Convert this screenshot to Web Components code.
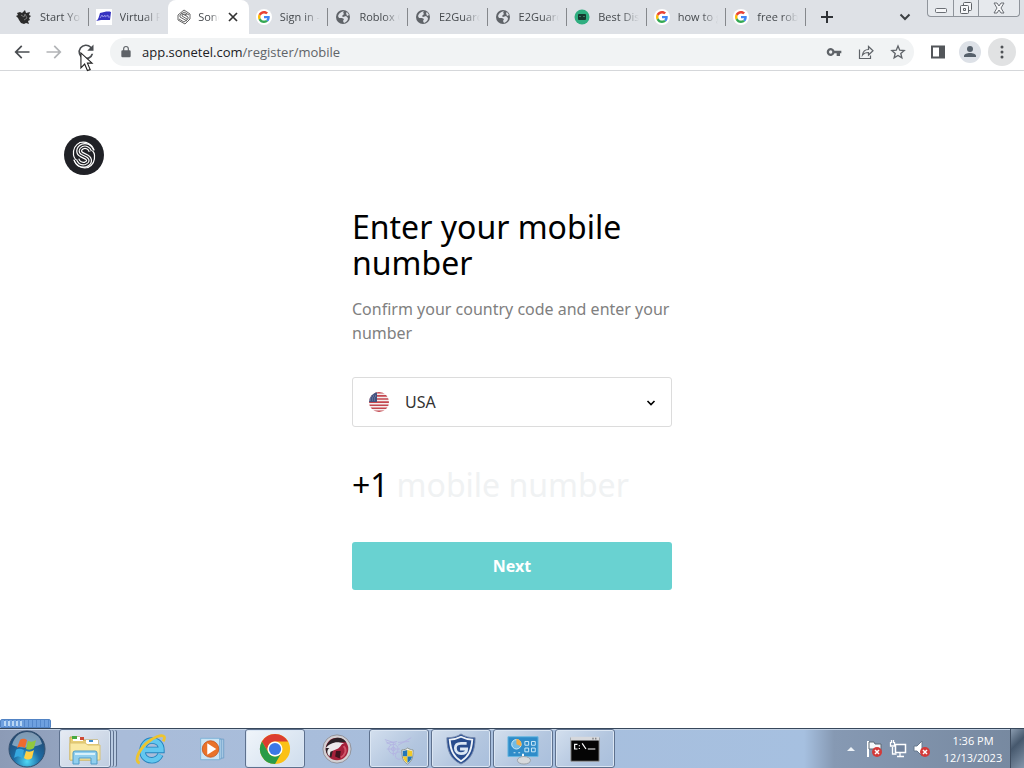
<!DOCTYPE html>
<html lang="en">
<head>
<meta charset="utf-8">
<meta name="viewport" content="width=device-width, initial-scale=1">
<title>Sonetel</title>
<style>
  html, body {
    margin: 0;
    height: 100%;
  }
  body {
    font-family: "Open Sans", "Noto Sans", sans-serif;
    background: #fff;
  }
</style>
</head>
<body>
<desktop-screen>
  <tab-strip slot="browser">
    <browser-tab icon="eagle">Start Your</browser-tab>
    <browser-tab icon="virtual">Virtual P</browser-tab>
    <browser-tab icon="swirl" active>Sonetel</browser-tab>
    <browser-tab icon="google">Sign in -</browser-tab>
    <browser-tab icon="globe">Roblox G</browser-tab>
    <browser-tab icon="globe">E2Guardian</browser-tab>
    <browser-tab icon="globe">E2Guardian</browser-tab>
    <browser-tab icon="robot">Best Disc</browser-tab>
    <browser-tab icon="google">how to g</browser-tab>
    <browser-tab icon="google">free robux</browser-tab>
  </tab-strip>
  <nav-bar slot="browser"></nav-bar>
  <register-page slot="page"></register-page>
  <task-bar slot="taskbar"></task-bar>
</desktop-screen>

<script>
const icons = {
  eagle: `<svg viewBox="0 0 16 16"><path fill="#2b2b2b" d="M1 4l3-1 2 1 3-3 1 3 4-1-1 3 2 1-2 2 1 2-2 1 1 3-3-1-2 1-3-1-2-3-1-2-2-2 2-1z"/><path d="M5 6l3 2 1-3 2 4-3 2" fill="none" stroke="#777"/></svg>`,
  virtual: `<svg viewBox="0 0 16 16"><path fill="#fff" d="M0 0h16v16H0z"/><path fill="#3532c0" d="M4 4c4-1 8-2 11-1l-1 8H5l-5 1c2-1 3-4 4-8z"/><path d="M4 9l2-3 1 2 2-2v2l3-2v2h2" fill="none" stroke="#8f8de6"/></svg>`,
  swirl: `<svg viewBox="0 0 16 16" fill="none" stroke="#666" stroke-width="1"><path d="M8 1l6 4v5l-5 5-7-4V6z"/><path d="M13 6L8 3 4 6v2l7 4M3 10l5 3 4-3V8L5 4"/><path d="M11 6L8 5 6 6v1l5 3"/></svg>`,
  google: `<svg viewBox="0 0 48 48"><circle cx="24" cy="24" r="24" fill="#fff"/><g transform="translate(6 6) scale(.75)"><path fill="#ea4335" d="M24 9.500c3.540 0 6.710 1.220 9.210 3.600l6.850-6.850C35.900 2.380 30.470 0 24 0 14.620 0 6.510 5.380 2.560 13.220l7.980 6.190C12.430 13.720 17.740 9.500 24 9.500z"/><path fill="#4285f4" d="M46.980 24.550c0-1.570-.15-3.090-.38-4.550H24v9.020h12.940c-.58 2.960-2.260 5.480-4.780 7.180l7.730 6c4.510-4.180 7.090-10.360 7.090-17.650z"/><path fill="#fbbc05" d="M10.530 28.590A14.500 14.500 0 0 1 9.770 24c0-1.600.27-3.140.76-4.590l-7.980-6.190A23.900 23.900 0 0 0 0 24c0 3.880.92 7.540 2.560 10.780z"/><path fill="#34a853" d="M24 48c6.480 0 11.930-2.130 15.890-5.810l-7.730-6c-2.150 1.450-4.920 2.300-8.160 2.300-6.260 0-11.570-4.220-13.470-9.910l-7.980 6.190C6.510 42.620 14.620 48 24 48z"/></g></svg>`,
  globe: `<svg viewBox="0 0 16 16"><circle cx="8" cy="8" r="7" fill="#5f6368"/><path fill="#dee1e6" d="M3 7c1-3 3-4 6-5-1 1-1 2 0 3l-2 2 1 1 3-1 2 2c0 3-2 4-4 5l-1-2 1-2-2-1H4zM11 4l1-1 2 3-2 1z"/></svg>`,
  robot: `<svg viewBox="0 0 16 16"><circle cx="8" cy="8" r="7.500" fill="#2fae80"/><rect x="4" y="5" width="8" height="6" rx="1" fill="#16382f"/><path d="M5 7h2v1H5zM9 7h2v1H9z" fill="#3c7a68"/></svg>`,
  close: `<svg viewBox="0 0 16 16"><path d="M4 4l8 8M12 4l-8 8" stroke="#333" stroke-width="1.700"/></svg>`,
  plus: `<svg viewBox="0 0 16 16"><path d="M8 2v12M2 8h12" stroke="#2f3236" stroke-width="2"/></svg>`,
  chevron: `<svg viewBox="0 0 16 16"><path d="M3.500 5.500L8 10l4.500-4.500" fill="none" stroke="#3c4043" stroke-width="2"/></svg>`,
  back: `<svg viewBox="0 0 24 24"><path fill="#4a4d51" d="M21 11H6.830l5.590-5.590L11 4l-8 8 8 8 1.410-1.410L6.830 13H21z"/></svg>`,
  forward: `<svg viewBox="0 0 24 24"><path fill="#b2b4b7" d="M3 11h14.170l-5.590-5.590L13 4l8 8-8 8-1.410-1.410L17.170 13H3z"/></svg>`,
  reload: `<svg viewBox="0 0 24 24"><path fill="#4a4d51" d="M18.400 5.600A9 9 0 1 0 20.700 14h-2.100A7 7 0 1 1 17 7l-3.500 3.500H21V3z"/></svg>`,
  lock: `<svg viewBox="0 0 24 24"><path fill="#5f6368" d="M17 9V6.500a5 5 0 0 0-10 0V9H6a2 2 0 0 0-2 2v8a2 2 0 0 0 2 2h12a2 2 0 0 0 2-2v-8a2 2 0 0 0-2-2zM9 6.500a3 3 0 0 1 6 0V9H9z"/></svg>`,
  key: `<svg viewBox="0 0 24 24"><path fill="#5f6368" fill-rule="evenodd" d="M12.700 10A6 6 0 1 0 12.700 14H16v4h5v-4h2v-4zM7 14.500a2.500 2.500 0 1 1 0-5 2.500 2.500 0 0 1 0 5z"/></svg>`,
  share: `<svg viewBox="0 0 16 16" fill="none" stroke="#5f6368" stroke-width="1.200"><path d="M1.500 5.500v9h11v-3"/><path d="M4.500 11c.5-4 3-5.500 6-5.500v-3L15 6.800 10.500 11V8.500c-3 0-4.500.5-6 2.500z"/></svg>`,
  star: `<svg viewBox="0 0 24 24"><path fill="none" stroke="#5f6368" stroke-width="2" d="M12 3l2.600 6.200 6.700.6-5.100 4.400 1.600 6.600L12 17.300l-5.800 3.500 1.600-6.600-5.100-4.400 6.700-.6z"/></svg>`,
  panel: `<svg viewBox="0 0 16 16"><path fill="#53565a" fill-rule="evenodd" d="M1 1.500h14v13H1zM3 3.500h6v9H3z"/></svg>`,
  person: `<svg viewBox="0 0 22 22"><circle cx="11" cy="11" r="11" fill="#dde1e7"/><circle cx="11" cy="8" r="3" fill="#56606b"/><path fill="#56606b" d="M5 16v-1c0-2 3-3 6-3s6 1 6 3v1z"/></svg>`,
  dots: `<svg viewBox="0 0 16 16" fill="#4f5256"><circle cx="8" cy="3" r="1.500"/><circle cx="8" cy="8" r="1.500"/><circle cx="8" cy="13" r="1.500"/></svg>`,
  minimize: `<svg viewBox="0 0 16 16"><rect x="2.500" y="8.500" width="11" height="4" rx="1" fill="#f6f7f9" stroke="#6b6f75"/></svg>`,
  restore: `<svg viewBox="0 0 16 16" fill="#f6f7f9" stroke="#5f6368"><rect x="5.500" y="2.500" width="8" height="8" rx="1"/><rect x="2.500" y="5.500" width="8" height="8" rx="1"/><path d="M5.500 8.500h2v2h-2z"/></svg>`,
  exit: `<svg viewBox="0 0 16 16"><path d="M3 3h3l2 3 2-3h3l-3 5 3 5h-3l-2-3-2 3H3l3-5z" fill="#f6f7f9" stroke="#6b6f75"/></svg>`,
  logo: `<svg viewBox="0 0 40 40" fill="none"><defs><path id="s" d="M27.500 16C26 12 22 10 18.500 11.500c-4 2-4.500 6-1 8l5 2.500c4 2.500 3 6-1 7.500-4 1-7.500-1-9-5"/></defs><circle cx="20" cy="20" r="20" fill="#202126"/><g stroke="#fff" stroke-width="1.200" stroke-linecap="round"><path d="M16 7.500C11 10 9 15 9.500 20c.5 4 3 6 7 8"/><path d="M16 7.500C22 6 28 9 30 15"/><path d="M24 32.500c5-2.500 7-7.500 6.500-12.500-.5-4-3-6-7-8"/><path d="M24 32.500C18 34 12 31 10 25"/></g><use href="#s" stroke="#fff" stroke-width="6"/><use href="#s" stroke="#202126" stroke-width="3.600"/><use href="#s" stroke="#fff" stroke-width="1.100"/></svg>`,
  flag: `<svg viewBox="0 0 20 20"><defs><clipPath id="round"><circle cx="10" cy="10" r="10"/></clipPath></defs><g clip-path="url(#round)"><path fill="#f5eeee" d="M0 0h20v20H0z"/><path stroke="#c4474f" stroke-width="1.600" d="M0 .8h20M0 3.900h20M0 7h20M0 10.100h20M0 13.200h20M0 16.300h20M0 19.400h20"/><path fill="#42527f" d="M0 0h8v10H0z"/><path stroke="#7f8bb0" stroke-dasharray="1 1" d="M2 4h5M1 6h6M1 8h6"/></g></svg>`,
  caret: `<svg viewBox="0 0 10 10"><path d="M1.500 4L5 7.500 8.500 4" fill="none" stroke="#000" stroke-width="1.600"/></svg>`,
  pointer: `<svg viewBox="0 0 14 22"><path d="M1 1v16l4-4 3 7 3-1-3-7h5z" fill="#fff" stroke="#222" stroke-width="1.200"/></svg>`,
  windows: `<svg viewBox="0 0 38 38"><defs><radialGradient id="orb" cx=".5" cy=".85" r=".8"><stop offset="0" stop-color="#4fd8f5"/><stop offset=".45" stop-color="#1d6ca5"/><stop offset="1" stop-color="#23466d"/></radialGradient></defs><circle cx="19" cy="19" r="18" fill="url(#orb)" stroke="#34506f"/><path d="M4 15C7 5 13 2 19 2s13 3 15 12c-9 4-20 5-30 1z" fill="#dcecf5" opacity=".5"/><path fill="#ee6b2f" d="M12 10c3-2 5-1 7 0l-2 8c-2-1-5-2-8 0z"/><path fill="#91c83e" d="M20 11c3 1 5 1 8-1l-2 8c-3 2-5 2-8 1z"/><path fill="#36a8e0" d="M8 20c3-2 5-1 8 0l-2 8c-3-2-5-2-8 0z"/><path fill="#ffd044" d="M18 21c3 1 5 1 8-1l-2 8c-3 2-5 2-8 0z"/></svg>`,
  explorer: `<svg viewBox="0 0 34 34"><path fill="#e8ce77" stroke="#c3a852" d="M2 5h10l2 3h16v20H2z"/><path fill="#fff" d="M5 5h10v4H5zM18 8h12v4H18z"/><path fill="#45aa43" d="M4 4h5v3H4z"/><path fill="#ce4a35" d="M12 5h4v3h-4z"/><path fill="#3e8ecb" d="M21 8h4v2h-4z"/><path fill="#f9e9a4" stroke="#dac271" d="M2 11h15l3 2h12v15H2z"/><path fill="#91cfee" stroke="#4e9bc8" d="M5 32V21q0-2 2-2h20q2 0 2 2v11h-6v-6H11v6z"/><path fill="#d7f1fb" d="M7 21h20v2H7z"/></svg>`,
  ie: `<svg viewBox="0 0 34 34"><path fill="none" stroke="#2583bd" stroke-width="7" d="M27 23c-2 4-5 6-9 6-6 0-10-4-10-10S12 8 18 8s10 4 10 10H10"/><path fill="none" stroke="#63c7ef" stroke-width="5" d="M27 23c-2 4-5 6-9 6-6 0-10-4-10-10S12 8 18 8s10 4 10 10H10"/><path fill="none" stroke="#edc42f" stroke-width="3" d="M5 32C-1 30 3 20 12 11 20 4 29 1 31 4c1 1 0 3-1 5"/></svg>`,
  player: `<svg viewBox="0 0 34 34"><path fill="#a5c7e2" stroke="#6c9fc8" d="M10 5h20v23H10z"/><path fill="#b9d8ee" stroke="#6c9fc8" d="M7 5h20v24H7z"/><path fill="#cae4f4" stroke="#75aed5" d="M2 4h23v26H2z"/><circle cx="14" cy="17" r="10" fill="#e9732a" stroke="#c5541c"/><path fill="#fff" d="M10 10l11 7-11 7z"/></svg>`,
  chrome: `<svg viewBox="0 0 34 34"><circle cx="17" cy="17" r="16" fill="#fbc116"/><path fill="#dc3d30" d="M3.140 9A16 16 0 0 1 30.860 9H17a8 8 0 0 0-7 12z"/><path fill="#299b48" d="M3.140 9l6.930 12A8 8 0 0 0 17 25a8 8 0 0 0 6.930-4L17 33A16 16 0 0 1 3.140 9z"/><circle cx="17" cy="17" r="8" fill="#fff"/><circle cx="17" cy="17" r="6.500" fill="#3b78e7"/></svg>`,
  dragon: `<svg viewBox="0 0 34 34"><circle cx="17" cy="17" r="15" fill="#d3d1d4" stroke="#8e8f98"/><circle cx="17" cy="17" r="12" fill="#a5203a"/><path fill="#2b2227" d="M5 17C6 9 12 5 18 5c4 0 7 2 9 5-5-1-12 1-14 7l-2 9c-4-2-6-5-6-9z"/><path fill="#eceaec" d="M5 16c3-4 9-7 15-6l5 1c-4 0-4 5-8 6l-7 3-1 5c-3-3-3-7 0-9z"/><path d="M16 19h5l-1 8-5-2z" fill="#40131e"/><path d="M24 14c4 4 2 9-3 12" fill="none" stroke="#d0566a" stroke-width="2"/></svg>`,
  setup: `<svg viewBox="0 0 34 34"><g fill="none" stroke="#b3b4e2"><circle cx="11" cy="17" r="5"/><circle cx="11" cy="17" r="2"/><circle cx="17" cy="24" r="4"/><path d="M2 7l12 4M4 11l11-2M16 13l14-8M11 10v14M4 17h14M16 10l12-1M3 9l6 4"/></g><path fill="#f5f5ef" stroke="#8a918a" d="M20 18c3 0 5-1 6-2 2 1 4 2 6 2 0 8-1 12-6 15-5-3-6-7-6-15z"/><path fill="#2476b8" d="M21 19l5-1v7h-5z"/><path fill="#f1c927" d="M26 18l5 1v6h-5zM21 25h5v7c-3-2-4-4-5-7z"/><path fill="#2476b8" d="M26 25h5c-1 3-2 5-5 7z"/></svg>`,
  shield: `<svg viewBox="0 0 34 34"><path fill="#294d8e" stroke="#7589ad" d="M17 1c4 3 9 4 15 4 0 14-4 23-15 28C6 28 2 19 2 5c6 0 11-1 15-4z"/><path fill="none" stroke="#edf2f8" stroke-width="2" d="M17 4c4 2 8 3 12 3-1 12-4 18-12 23C9 25 6 19 5 7c4 0 8-1 12-3z"/><path fill="none" stroke="#dce8f5" stroke-width="3" d="M23 11h-6c-4 0-6 2-6 5 0 4 3 6 6 6 4 0 6-2 6-5h-7"/></svg>`,
  control: `<svg viewBox="0 0 34 34"><path fill="#2f8cc9" stroke="#66b8e1" d="M1 4h32v21H1z"/><circle cx="10" cy="12" r="5" fill="#72bce5" stroke="#d5edf8"/><path fill="#f3ae48" d="M10 12V6a6 6 0 0 1 5 8z"/><g fill="none" stroke="#d3edf9"><path d="M19 9h4v4h-4zM26 9h4v4h-4zM19 16h4v4h-4zM26 16h4v4h-4zM7 21h2M12 21h2"/></g><path fill="#fff" d="M16 22h2v5h-2z"/><ellipse cx="18" cy="29" rx="7" ry="4" fill="#d6d9dc" stroke="#999fa6"/></svg>`,
  console: `<svg viewBox="0 0 34 34"><path fill="#050505" stroke="#999" d="M2 5h30v25H2z"/><path fill="#d6d8dc" d="M2 4h30v4H2z"/><path fill="#555" d="M25 5h1v2h-1zM28 5h1v2h-1z"/><path d="M9 12H6v5h3M11 13v1M11 16v1M14 11l4 6M20 17h8" fill="none" stroke="#fff" stroke-width="1.300"/></svg>`,
  up: `<svg viewBox="0 0 16 16"><path d="M4 10l4-4 4 4z" fill="#eef3f8"/></svg>`,
  action: `<svg viewBox="0 0 18 18"><path d="M3 1v16" stroke="#fff" stroke-width="2"/><path d="M4 2h5l1 2h6v7h-6L9 9H4z" fill="#f5f8fb" stroke="#5d6874"/><circle cx="12" cy="12" r="5" fill="#d33a39"/><path d="M10 10l4 4M14 10l-4 4" stroke="#fff" stroke-width="1.500"/></svg>`,
  network: `<svg viewBox="0 0 18 18"><path d="M6.500 4.500h10v8h-10z" fill="#71839d" stroke="#fff" stroke-width="1.500"/><path d="M11 13v3M8 16.500h7M3.500 7v7h4M1.500 2v4h4V2M2.500 0v3M4.500 0v3" fill="none" stroke="#fff" stroke-width="1.300"/></svg>`,
  volume: `<svg viewBox="0 0 18 18"><path d="M1 6h3l5-5v15l-5-5H1z" fill="#fff" stroke="#67788d"/><circle cx="12" cy="12" r="5" fill="#d33a39"/><path d="M10 10l4 4M14 10l-4 4" stroke="#fff" stroke-width="1.500"/></svg>`
};

class UiIcon extends HTMLElement {
  connectedCallback() {
    const size = this.getAttribute("size") || 16;
    this.attachShadow({mode: "open"}).innerHTML = `
      <style>
        :host { display: block; flex: none; width: ${size}px; }
        svg { display: block; width: 100%; overflow: visible; }
      </style>
      ${icons[this.getAttribute("name")]}`;
  }
}

class DesktopScreen extends HTMLElement {
  connectedCallback() {
    this.attachShadow({mode: "open"}).innerHTML = `
      <style>
        :host {
          display: flex;
          flex-direction: column;
          min-height: 100vh;
          position: relative;
        }
        main { flex: 1; }
        footer { position: relative; }
        .pointer { position: absolute; left: 80px; top: 52px; }
        .progress {
          position: absolute;
          left: 0;
          bottom: 100%;
          width: 49px;
          height: 7px;
          border: 1px solid #5183c4;
          border-radius: 2px 2px 0 0;
          background: repeating-linear-gradient(90deg, #6ea0df 0 3px, #5488cc 3px 4px);
        }
        .progress div {
          width: 20px;
          height: 5px;
          margin: 1px 3px;
          background: repeating-linear-gradient(90deg, #b9d7f5 0 2px, #6c9edc 2px 4px);
        }
      </style>
      <header><slot name="browser"></slot></header>
      <main><slot name="page"></slot></main>
      <footer>
        <div class="progress"><div></div></div>
        <slot name="taskbar"></slot>
      </footer>
      <ui-icon class="pointer" name="pointer" size="13"></ui-icon>`;
  }
}

class TabStrip extends HTMLElement {
  connectedCallback() {
    this.attachShadow({mode: "open"}).innerHTML = `
      <style>
        :host {
          display: flex;
          height: 34px;
          padding-left: 9px;
          background: #dee1e6;
        }
        .tabs { display: flex; flex: 0 1 797px; min-width: 0; }
        button {
          display: flex;
          align-items: center;
          justify-content: center;
          border: 0;
          padding: 0;
          background: none;
        }
        .add { width: 42px; }
        .search { width: 44px; margin-left: auto; }
        .controls {
          display: flex;
          height: 16px;
          margin: 0 4px 0 0;
          border: 1px solid #8f949b;
          border-top: 0;
          border-radius: 0 0 4px 4px;
          background: #e6e9ed;
        }
        .controls button { width: 25px; }
        .controls button + button { border-left: 1px solid #8f949b; }
        .controls .exit { width: 41px; }
      </style>
      <div class="tabs"><slot></slot></div>
      <button class="add" aria-label="New tab"><ui-icon name="plus"></ui-icon></button>
      <button class="search" aria-label="Search tabs"><ui-icon name="chevron"></ui-icon></button>
      <div class="controls">
        <button aria-label="Minimize"><ui-icon name="minimize"></ui-icon></button>
        <button aria-label="Restore"><ui-icon name="restore"></ui-icon></button>
        <button class="exit" aria-label="Close window"><ui-icon name="exit"></ui-icon></button>
      </div>`;
  }
}

class BrowserTab extends HTMLElement {
  connectedCallback() {
    const active = this.hasAttribute("active");
    this.attachShadow({mode: "open"}).innerHTML = `
      <style>
        :host {
          display: flex;
          flex: 1;
          align-items: center;
          gap: 8px;
          min-width: 0;
          box-sizing: border-box;
          padding: 0 8px 0 7px;
          font-size: 11px;
          line-height: 16px;
          color: #45494d;
          background: linear-gradient(#85888c, #85888c) right / 1px 18px no-repeat;
        }
        :host([active]) {
          gap: 6px;
          padding-left: 8px;
          background: #fff;
          border-radius: 8px 8px 0 0;
        }
        :host(:nth-child(2)) { background: none; }
        .title {
          flex: 1;
          overflow: hidden;
          white-space: nowrap;
          -webkit-mask-image: linear-gradient(90deg, #000 60%, transparent);
          mask-image: linear-gradient(90deg, #000 60%, transparent);
        }
        button { border: 0; padding: 0; background: none; }
      </style>
      <ui-icon name="${this.getAttribute("icon")}"></ui-icon>
      <span class="title"><slot></slot></span>
      ${active ? `<button aria-label="Close tab"><ui-icon name="close"></ui-icon></button>` : ""}`;
  }
}

class NavBar extends HTMLElement {
  connectedCallback() {
    this.attachShadow({mode: "open"}).innerHTML = `
      <style>
        :host {
          display: flex;
          align-items: center;
          height: 36px;
          padding: 0 6px;
          background: #fff;
          border-bottom: 1px solid #d5d7da;
        }
        button {
          display: flex;
          align-items: center;
          justify-content: center;
          flex: none;
          width: 32px;
          height: 28px;
          padding: 0;
          border: 0;
          background: none;
        }
        .address {
          display: flex;
          align-items: center;
          flex: 1;
          height: 28px;
          margin: 0 8px;
          padding-left: 9px;
          border-radius: 14px;
          background: #f1f3f4;
        }
        .url {
          flex: 1;
          margin-left: 9px;
          font-size: 13px;
          line-height: 20px;
          color: #5f6368;
        }
        .url b { font-weight: 400; color: #202124; }
        .menu { width: 28px; margin: 0 2px; border-radius: 14px; background: #e1e2e3; }
      </style>
      <button aria-label="Back"><ui-icon name="back" size="20"></ui-icon></button>
      <button aria-label="Forward"><ui-icon name="forward" size="20"></ui-icon></button>
      <button aria-label="Reload"><ui-icon name="reload" size="20"></ui-icon></button>
      <div class="address">
        <ui-icon name="lock" size="14"></ui-icon>
        <span class="url"><b>app.sonetel.com</b>/register/mobile</span>
        <button aria-label="Passwords"><ui-icon name="key"></ui-icon></button>
        <button aria-label="Share"><ui-icon name="share"></ui-icon></button>
        <button aria-label="Bookmark"><ui-icon name="star"></ui-icon></button>
      </div>
      <button aria-label="Side panel"><ui-icon name="panel"></ui-icon></button>
      <button aria-label="Profile"><ui-icon name="person" size="22"></ui-icon></button>
      <button class="menu" aria-label="Menu"><ui-icon name="dots"></ui-icon></button>`;
  }
}

class RegisterPage extends HTMLElement {
  connectedCallback() {
    this.attachShadow({mode: "open"}).innerHTML = `
      <style>
        :host {
          display: block;
          padding: 64px;
          font-family: "Noto Sans", "Open Sans", sans-serif;
          font-size: 16px;
          line-height: 24px;
        }
        form {
          display: flex;
          flex-direction: column;
          gap: 32px;
          max-width: 320px;
          margin: 34px auto 0;
        }
        h1 {
          margin: 0 0 16px;
          font-size: 32px;
          font-weight: 400;
          line-height: 36px;
          color: #000;
        }
        p { margin: 0; color: #808080; }
      </style>
      <ui-icon name="logo" size="40"></ui-icon>
      <form>
        <div>
          <h1>Enter your mobile number</h1>
          <p>Confirm your country code and enter your number</p>
        </div>
        <country-select></country-select>
        <phone-field code="+1"></phone-field>
        <submit-button>Next</submit-button>
      </form>`;
  }
}

class CountrySelect extends HTMLElement {
  connectedCallback() {
    this.attachShadow({mode: "open"}).innerHTML = `
      <style>
        :host {
          display: grid;
          grid-template-columns: 20px 1fr 10px;
          align-items: center;
          height: 48px;
          padding: 0 15px 0 16px;
          border: 1px solid #dcdcdc;
          border-radius: 3px;
        }
        select {
          height: 48px;
          padding: 0 16px;
          border: 0;
          appearance: none;
          background: none;
          font: inherit;
          color: #333;
        }
      </style>
      <ui-icon name="flag" size="20"></ui-icon>
      <select aria-label="Country"><option>USA</option></select>
      <ui-icon name="caret" size="10"></ui-icon>`;
  }
}

class PhoneField extends HTMLElement {
  connectedCallback() {
    this.attachShadow({mode: "open"}).innerHTML = `
      <style>
        :host {
          display: flex;
          align-items: center;
          gap: 8px;
          height: 51px;
          font-size: 32px;
          line-height: 48px;
          color: #000;
        }
        input {
          flex: 1;
          min-width: 0;
          padding: 0;
          border: 0;
          background: none;
          font: inherit;
        }
        input::placeholder { color: #f0f2f3; opacity: 1; }
      </style>
      <label for="number">${this.getAttribute("code")}</label>
      <input id="number" type="tel" placeholder="mobile number">`;
  }
}

class SubmitButton extends HTMLElement {
  connectedCallback() {
    this.attachShadow({mode: "open"}).innerHTML = `
      <style>
        :host { display: block; }
        button {
          display: block;
          width: 100%;
          height: 48px;
          border: 0;
          border-radius: 3px;
          background: #69d2d1;
          color: #fff;
          font: inherit;
          font-weight: 700;
        }
      </style>
      <button type="submit"><slot></slot></button>`;
  }
}

class TaskBar extends HTMLElement {
  connectedCallback() {
    this.attachShadow({mode: "open"}).innerHTML = `
      <style>
        :host {
          display: flex;
          align-items: stretch;
          height: 39px;
          padding-left: 8px;
          border-top: 1px solid #37475b;
          color: #fff;
          font-size: 11px;
          line-height: 17px;
          background: linear-gradient(90deg, #8c9bb6 0, #93a3bf 60px, #a9bcd9 120px, #a6c0e0 calc(100% - 220px), #8699b3 calc(100% - 190px), #76889f 100%);
          box-shadow: inset 0 1px #c3d2e5;
        }
        button {
          display: flex;
          align-items: center;
          justify-content: center;
          padding: 0;
          border: 0;
          background: none;
        }
        nav { display: flex; gap: 2px; margin-left: 13px; }
        nav button { width: 60px; box-sizing: border-box; }
        .open {
          border: 1px solid #5e718e;
          border-radius: 3px;
          background: linear-gradient(135deg, #d3dfee, #b3c6df 60%, #a9bfdc);
          box-shadow: inset 0 0 0 1px #dbe6f3;
        }
        .current { background: linear-gradient(135deg, #f0f5fa, #cfdded); }
        .stacked {
          width: 52px;
          margin-right: 8px;
          background: linear-gradient(135deg, #e6ebf3, #bfcde0);
          box-shadow: inset 0 0 0 1px #dbe6f3, 3px 0 0 -1px #b9cbe2, 4px 0 0 -1px #5e718e, 6px 0 0 -1px #b9cbe2, 7px 0 0 -1px #5e718e;
        }
        .tray { display: flex; align-items: center; gap: 6px; margin-left: auto; }
        time { width: 72px; padding-right: 1px; text-align: center; }
        .peek {
          width: 14px;
          border-left: 1px solid #3f4d60;
          background: linear-gradient(135deg, #8b9cb0, #46586d 40%, #8496ab);
        }
      </style>
      <button aria-label="Start"><ui-icon name="windows" size="38"></ui-icon></button>
      <nav>
        <button class="open stacked" aria-label="Explorer"><ui-icon name="explorer" size="34"></ui-icon></button>
        <button aria-label="Internet Explorer"><ui-icon name="ie" size="32"></ui-icon></button>
        <button aria-label="Media Player"><ui-icon name="player" size="28"></ui-icon></button>
        <button class="open current" aria-label="Chrome"><ui-icon name="chrome" size="32"></ui-icon></button>
        <button aria-label="Dragon"><ui-icon name="dragon" size="32"></ui-icon></button>
        <button class="open" aria-label="Setup"><ui-icon name="setup" size="32"></ui-icon></button>
        <button class="open" aria-label="Shield"><ui-icon name="shield" size="32"></ui-icon></button>
        <button class="open" aria-label="Control Panel"><ui-icon name="control" size="32"></ui-icon></button>
        <button class="open" aria-label="Console"><ui-icon name="console" size="32"></ui-icon></button>
      </nav>
      <div class="tray">
        <ui-icon name="up"></ui-icon>
        <ui-icon name="action" size="18"></ui-icon>
        <ui-icon name="network" size="18"></ui-icon>
        <ui-icon name="volume" size="18"></ui-icon>
        <time datetime="2023-12-13T13:36">1:36 PM<br>12/13/2023</time>
      </div>
      <button class="peek" aria-label="Show desktop"></button>`;
  }
}

customElements.define("ui-icon", UiIcon);
customElements.define("desktop-screen", DesktopScreen);
customElements.define("tab-strip", TabStrip);
customElements.define("browser-tab", BrowserTab);
customElements.define("nav-bar", NavBar);
customElements.define("register-page", RegisterPage);
customElements.define("country-select", CountrySelect);
customElements.define("phone-field", PhoneField);
customElements.define("submit-button", SubmitButton);
customElements.define("task-bar", TaskBar);
</script>
</body>
</html>
